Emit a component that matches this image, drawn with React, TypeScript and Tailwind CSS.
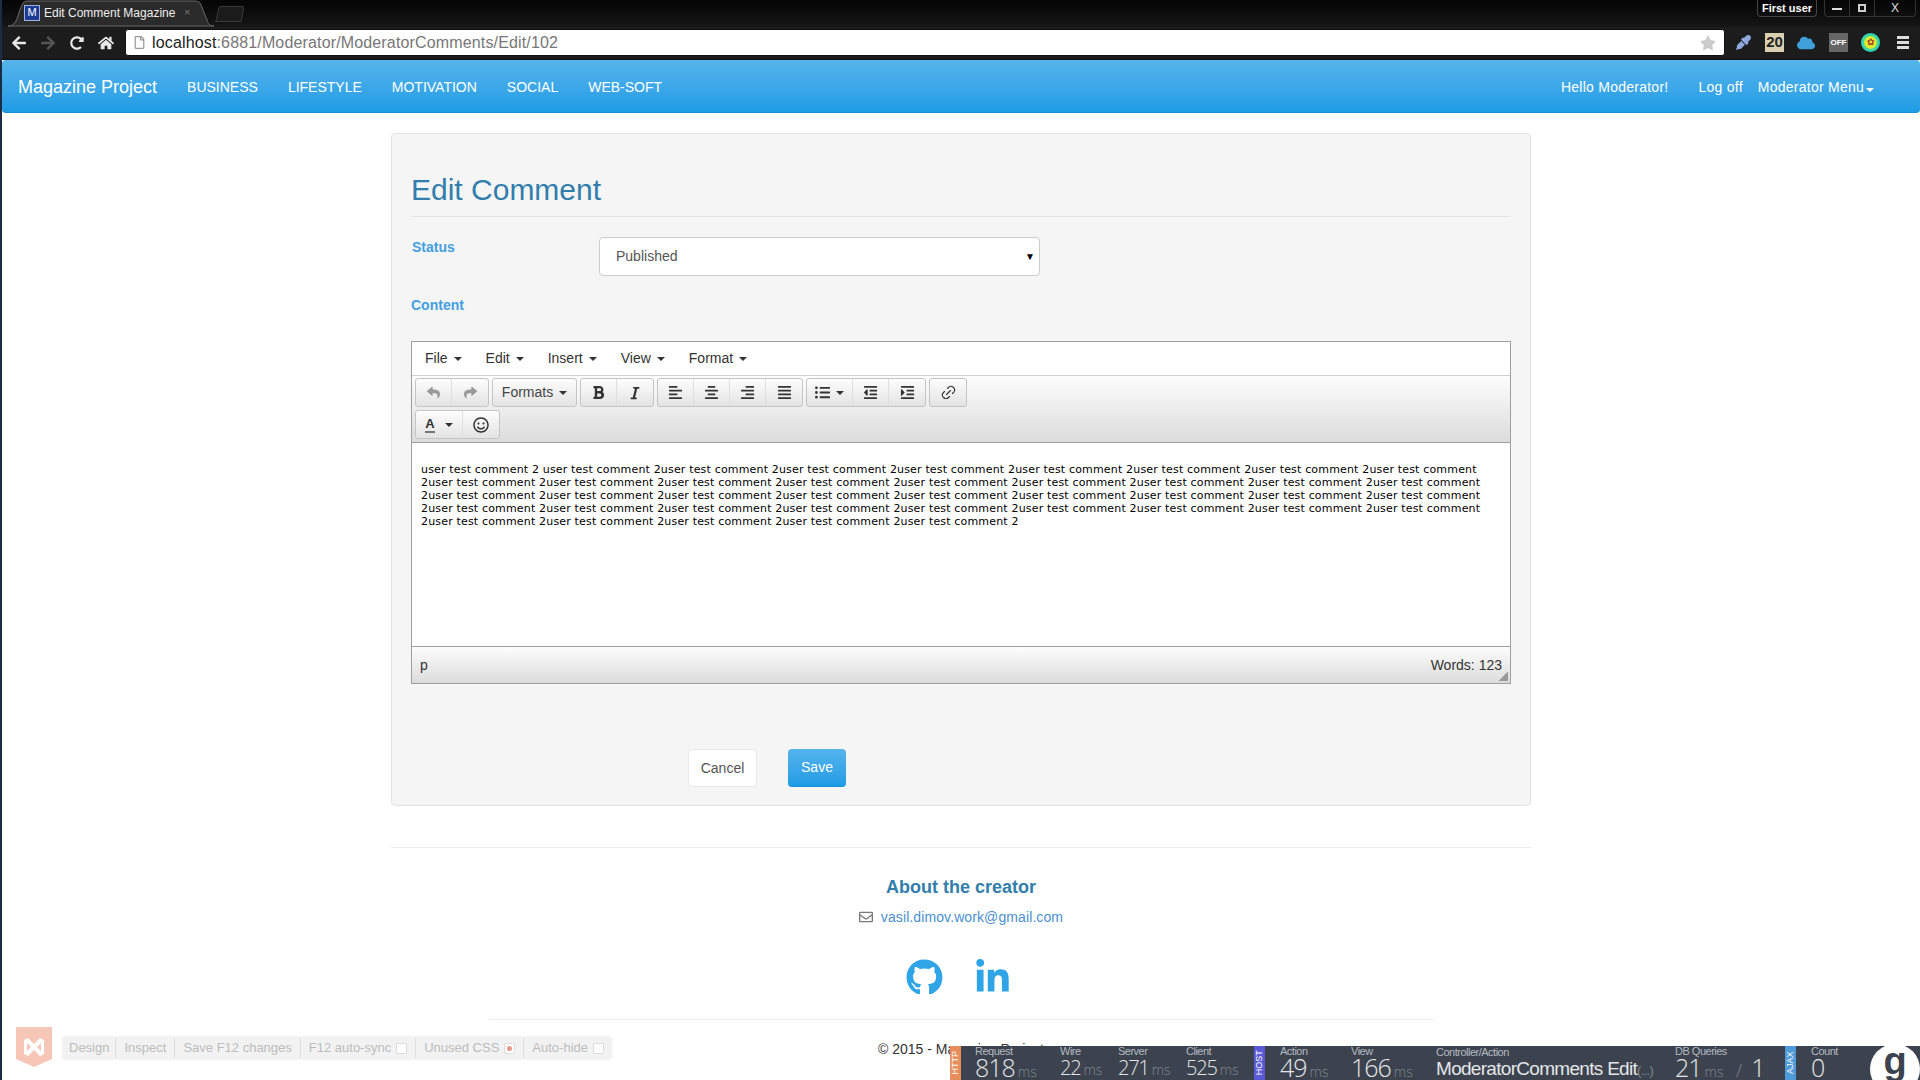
import type { ReactNode } from "react";
import {
  FaAlignCenter,
  FaAlignJustify,
  FaAlignLeft,
  FaAlignRight,
  FaArrowLeft,
  FaArrowRight,
  FaBold,
  FaCloud,
  FaEyeDropper,
  FaGithub,
  FaHome,
  FaIndent,
  FaItalic,
  FaLinkedinIn,
  FaListUl,
  FaOutdent,
  FaRedoAlt,
  FaRegEnvelope,
  FaRegFile,
  FaRegSmile,
  FaReply,
  FaShare,
  FaStar,
} from "react-icons/fa";
import { Link2 } from "lucide-react";

const navItems = ["BUSINESS", "LIFESTYLE", "MOTIVATION", "SOCIAL", "WEB-SOFT"];
const menuItems = ["File", "Edit", "Insert", "View", "Format"];
const commentLine = "2user test comment 2user test comment 2user test comment 2user test comment 2user test comment 2user test comment 2user test comment 2user test comment 2user test comment";

const Caret = ({ className = "border-t-[#333]" }: { className?: string }) => (
  <span className={`inline-block w-0 h-0 border-x-[4px] border-x-transparent border-t-[4px] ${className}`} />
);

const ToolGroup = ({ children }: { children: ReactNode }) => (
  <div className="flex h-[29px] rounded-[3px] border border-[#c5c5c5] bg-gradient-to-b from-[#fdfdfd] to-[#e3e3e3] text-[#333]">
    {children}
  </div>
);

const ToolBtn = ({ children, w = "w-9", last = false }: { children: ReactNode; w?: string; last?: boolean }) => (
  <div className={`flex items-center justify-center ${w} ${last ? "" : "border-r border-[#dedede]"}`}>{children}</div>
);

function BrowserChrome() {
  return (
    <div className="h-[60px] bg-[#141414] text-white">
      <div className="flex h-[27px] bg-gradient-to-b from-[#050505] to-[#161616]">
        <div className="relative ml-[6px] flex h-[27px] w-[206px] items-center pl-[16px]">
          <svg className="absolute inset-0" width="206" height="27" viewBox="0 0 206 27">
            <path d="M0 26 C7 26 9 20 11 12 L14 5 C15 2 17 1 20 1 L186 1 C190 1 192 2 193 5 L199 20 C200 24 202 26 206 26 Z" fill="#2b2b2b" stroke="#6b6b6b" />
          </svg>
          <div className="relative mb-[2px] flex h-4 w-4 items-center justify-center border border-[#9db3e0] bg-[#1f3a93] text-[11px]">M</div>
          <span className="relative mb-[2px] ml-[4px] w-[132px] overflow-hidden whitespace-nowrap text-[12px] text-[#eee]">Edit Comment Magazine P</span>
          <span className="relative mb-[2px] ml-[8px] text-[11px] text-[#777]">×</span>
        </div>
        <div className="mt-[6px] ml-[3px] h-[16px] w-[26px] -skew-x-12 rounded-t-[3px] border border-[#3a3a3a] bg-[#1b1b1b]" />
        <div className="ml-auto flex h-[17px] items-start pr-[4px]">
          <div className="flex h-[17px] w-[60px] items-center justify-center rounded-b-[4px] border border-t-0 border-[#444] text-[11px] font-bold">First user</div>
          <div className="ml-[7px] flex h-[17px] w-[92px] items-center rounded-b-[4px] border border-t-0 border-[#333] text-[#ddd]">
            <div className="flex h-full w-[25px] items-center justify-center border-r border-[#333]"><div className="mt-[2px] h-[2px] w-[10px] bg-[#ddd]" /></div>
            <div className="flex h-full w-[25px] items-center justify-center border-r border-[#333]">
              <div className="h-[8px] w-[8px] border-[2px] border-[#ccc]" />
            </div>
            <div className="flex-1 text-center text-[12px] leading-[15px]">X</div>
          </div>
        </div>
      </div>
      <div className="flex h-[31px] items-center bg-[#1c1c1c]">
        <div className="flex w-[123px] items-center text-[16px]">
          <FaArrowLeft className="ml-[9px]" color="#e8e8e8" />
          <FaArrowRight className="ml-[13px]" color="#555" />
          <FaRedoAlt className="ml-[14px] text-[14px]" color="#e8e8e8" />
          <FaHome className="ml-[14px]" color="#e8e8e8" />
        </div>
        <div className="flex h-[27px] w-[1600px] items-center rounded-[3px] border border-[#111] bg-white pl-[7px] pr-[8px]">
          <FaRegFile className="text-[13px]" color="#999" />
          <span className="ml-[6px] text-[16px] tracking-[0.15px] text-[#777]"><span className="text-[#222]">localhost</span>:6881/Moderator/ModeratorComments/Edit/102</span>
          <FaStar className="ml-auto text-[16px]" color="#ccc" />
        </div>
        <div className="flex items-center">
          <FaEyeDropper className="ml-[11px] text-[15px]" color="#8fa8e0" />
          <div className="ml-[14px] flex h-[19px] w-[19px] items-center justify-center bg-[#d8d0b0] text-[15px] font-bold text-[#222]">20</div>
          <FaCloud className="ml-[13px] text-[18px]" color="#3f9fd8" />
          <div className="ml-[14px] flex h-[19px] w-[19px] items-center justify-center bg-[#666] text-[8px] font-bold">OFF</div>
          <div className="ml-[13px] flex h-[19px] w-[19px] items-center justify-center rounded-full border-[3px] border-[#33d6b0] bg-[#dce82a] text-[9px] text-[#a33]">✿</div>
          <div className="ml-[17px] flex w-[12px] flex-col gap-[2px]">
            <div className="h-[3px] bg-[#ddd]" />
            <div className="h-[3px] bg-[#ddd]" />
            <div className="h-[3px] bg-[#ddd]" />
          </div>
        </div>
      </div>
    </div>
  );
}

function Navbar() {
  return (
    <div className="flex h-[53px] items-center rounded-[4px] border-b border-[#1a8fd6] bg-gradient-to-b from-[#54b4eb] to-[#1d9ce5] pt-[2px] text-[14px] text-white">
      <div className="ml-[16px] text-[18px]">Magazine Project</div>
      <div className="ml-[15px] flex">
        {navItems.map((item) => (
          <div key={item} className="px-[15px]">{item}</div>
        ))}
      </div>
      <div className="ml-auto flex items-center pr-[46px] tracking-[0.25px]">
        <span>Hello Moderator!</span>
        <span className="ml-[30px]">Log off</span>
        <span className="ml-[15px]">Moderator Menu</span>
        <span className="ml-[2px]"><Caret className="border-t-white" /></span>
      </div>
    </div>
  );
}

function Editor() {
  return (
    <div className="mt-[27px] border border-[#9e9e9e] bg-white">
      <div className="flex h-[34px] items-center gap-[24px] border-b border-[#d0d0d0] pl-[13px] text-[14px] text-[#333]">
        {menuItems.map((item) => (
          <div key={item} className="flex items-center gap-[6px]">
            {item}
            <Caret />
          </div>
        ))}
      </div>
      <div className="flex h-[67px] flex-col gap-[3px] border-b border-[#9e9e9e] bg-gradient-to-b from-[#fdfdfd] to-[#dcdcdc] pl-[3px] pt-[2px] text-[15px]">
        <div className="flex gap-[3px]">
          <ToolGroup>
            <ToolBtn><FaReply color="#999" className="text-[13px]" /></ToolBtn>
            <ToolBtn last><FaShare color="#999" className="text-[13px]" /></ToolBtn>
          </ToolGroup>
          <ToolGroup>
            <div className="flex w-[83px] items-center justify-center gap-[6px] text-[14px] text-[#444]">Formats <Caret /></div>
          </ToolGroup>
          <ToolGroup>
            <ToolBtn><FaBold className="text-[15px]" /></ToolBtn>
            <ToolBtn last><FaItalic className="text-[14px]" /></ToolBtn>
          </ToolGroup>
          <ToolGroup>
            <ToolBtn><FaAlignLeft /></ToolBtn>
            <ToolBtn><FaAlignCenter /></ToolBtn>
            <ToolBtn><FaAlignRight /></ToolBtn>
            <ToolBtn last><FaAlignJustify /></ToolBtn>
          </ToolGroup>
          <ToolGroup>
            <ToolBtn w="w-[46px]"><FaListUl /><span className="ml-[6px] flex"><Caret /></span></ToolBtn>
            <ToolBtn><FaOutdent /></ToolBtn>
            <ToolBtn last><FaIndent /></ToolBtn>
          </ToolGroup>
          <ToolGroup>
            <ToolBtn last><Link2 size={17} strokeWidth={1.6} className="-rotate-45" /></ToolBtn>
          </ToolGroup>
        </div>
        <div className="flex">
          <ToolGroup>
            <ToolBtn w="w-[47px]">
              <span className="border-b-[2px] border-[#777] text-[13px] font-bold leading-[15px]">A</span>
              <span className="ml-[10px] flex"><Caret /></span>
            </ToolBtn>
            <ToolBtn w="w-9" last><FaRegSmile className="text-[16px]" /></ToolBtn>
          </ToolGroup>
        </div>
      </div>
      <div className="h-[203px] whitespace-nowrap pl-[9px] pt-[20px] font-['DejaVu_Sans',sans-serif] text-[11px] leading-[13px] tracking-[0.17px] text-black">
        <div>user test comment 2 user test comment 2user test comment 2user test comment 2user test comment 2user test comment 2user test comment 2user test comment 2user test comment</div>
        <div>{commentLine}</div>
        <div>{commentLine}</div>
        <div>{commentLine}</div>
        <div>2user test comment 2user test comment 2user test comment 2user test comment 2user test comment 2</div>
      </div>
      <div className="relative flex h-[37px] items-center justify-between border-t border-[#9e9e9e] bg-gradient-to-b from-[#fdfdfd] to-[#dcdcdc] px-[8px] text-[14px] text-[#333]">
        <span>p</span>
        <span>Words: 123</span>
        <div className="absolute bottom-[2px] right-[2px] h-[9px] w-[9px] bg-[linear-gradient(135deg,transparent_50%,#999_50%)]" />
      </div>
    </div>
  );
}

function Glimpse() {
  const Metric = ({ x, label, value, unit, small = false }: { x: string; label: string; value: string; unit?: string; small?: boolean }) => (
    <div className={`absolute top-0 ${x} whitespace-nowrap`}>
      <div className="h-[10px] text-[11px] leading-[10px] tracking-[-0.5px] text-[#b5bac2]">{label}</div>
      <div className={`font-['Open_Sans',sans-serif] font-light leading-[23px] text-[#e4e6e9] ${small ? "text-[20px] tracking-[-1.2px]" : "text-[25px] tracking-[-1px]"}`}>
        {value}
        {unit && <span className="ml-[3px] text-[14px] tracking-normal text-[#80868f]">{unit}</span>}
      </div>
    </div>
  );
  const Tag = ({ x, color, text }: { x: string; color: string; text: string }) => (
    <div className={`absolute top-0 flex h-full w-[11px] items-center justify-center text-[9px] text-white ${x} ${color}`}>
      <span className="-rotate-90">{text}</span>
    </div>
  );
  return (
    <div className="absolute bottom-0 right-0 h-[34px] w-[970px] overflow-hidden bg-[#3c434e]">
      <Tag x="left-0" color="bg-[#e88d5c]" text="HTTP" />
      <Metric x="left-[25px]" label="Request" value="818" unit="ms" />
      <Metric x="left-[110px]" label="Wire" value="22" unit="ms" small />
      <Metric x="left-[168px]" label="Server" value="271" unit="ms" small />
      <Metric x="left-[236px]" label="Client" value="525" unit="ms" small />
      <Tag x="left-[304px]" color="bg-[#5a5ad6]" text="HOST" />
      <Metric x="left-[330px]" label="Action" value="49" unit="ms" />
      <Metric x="left-[401px]" label="View" value="166" unit="ms" />
      <div className="absolute left-[486px] top-0 whitespace-nowrap">
        <div className="h-[13px] text-[11px] leading-[13px] tracking-[-0.5px] text-[#b5bac2]">Controller/Action</div>
        <div className="text-[19px] leading-[20px] tracking-[-0.7px] text-[#e4e6e9]">ModeratorComments Edit<span className="text-[13px] text-[#80868f]">(...)</span></div>
      </div>
      <Metric x="left-[725px]" label="DB Queries" value="21" unit="ms" />
      <div className="absolute left-[786px] top-[10px] font-['Open_Sans',sans-serif] font-light text-[25px] leading-[23px] text-[#e4e6e9]"><span className="mr-[9px] text-[18px] text-[#80868f]">/</span>1</div>
      <Tag x="left-[835px]" color="bg-[#4f9ad8]" text="AJAX" />
      <Metric x="left-[861px]" label="Count" value="0" />
      <div className="absolute left-[920px] top-[-2px] flex h-[50px] w-[50px] items-start justify-center rounded-full bg-white">
        <span className="text-[38px] font-bold leading-[34px] text-[#3c434e]">g</span>
      </div>
    </div>
  );
}

function BrowserLink() {
  const cell = "border-l border-[#dddddd] px-[8px]";
  const box = "ml-[5px] inline-block h-[11px] w-[11px] rounded-[2px] border border-[#dcdcdc] bg-white align-middle";
  return (
    <div className="absolute bottom-[20px] left-[14px] flex items-end">
      <svg width="36" height="40" viewBox="0 0 36 40" className="mb-[-7px]">
        <path d="M0 0 H36 V32 L18 40 L0 32 Z" fill="#f6c6b6" />
        <path d="M8 13 L12 11 L18 17 L24 11 L28 13 V27 L24 29 L18 23 L12 29 L8 27 Z" fill="#fff" />
        <path d="M11 16 L15 20 L11 24 Z M25 16 L21 20 L25 24 Z" fill="#f6c6b6" />
      </svg>
      <div className="ml-[10px] flex h-[24px] w-[550px] items-center rounded-[4px] bg-[#f2f2f2] pl-[1px] text-[13px] text-[#bcbcbc]">
        <span className="px-[6px]">Design</span>
        <span className={cell}>Inspect</span>
        <span className={cell}>Save F12 changes</span>
        <span className={cell}>F12 auto-sync<span className={box} /></span>
        <span className={cell}>Unused CSS<span className={`${box} relative bg-[#f4d9d0]`}><span className="absolute left-[2px] top-[2px] h-[5px] w-[5px] rounded-full bg-[#e59a85]" /></span></span>
        <span className={cell}>Auto-hide<span className={box} /></span>
      </div>
    </div>
  );
}

export default function App() {
  return (
    <div className="relative h-[1080px] overflow-hidden border-l-2 border-[#1d2b45] bg-white font-['Liberation_Sans',Arial,sans-serif] text-[14px]">
      <BrowserChrome />
      <Navbar />
      <div className="mx-auto w-[1140px]">
        <div className="mt-[20px] h-[673px] rounded-[4px] border border-[#e3e3e3] bg-[#f5f5f5] px-[19px] pt-[38px]">
          <h2 className="border-b border-[#e4e4e4] pb-[8px] text-[30px] leading-[36px] text-[#317eac]">Edit Comment</h2>
          <div className="mt-[20px] flex items-start">
            <label className="w-[188px] pl-px font-bold text-[#429fe0]">Status</label>
            <div className="flex h-[39px] w-[441px] items-center justify-between rounded-[4px] border border-[#ccc] bg-white pl-[16px] pr-[4px] text-[#555]">
              <span>Published</span>
              <span className="text-[10px] text-black">▼</span>
            </div>
          </div>
          <label className="mt-[20px] block font-bold leading-[18px] text-[#429fe0]">Content</label>
          <Editor />
          <div className="ml-[277px] mt-[65px] flex gap-[31px]">
            <div className="flex h-[38px] w-[69px] items-center justify-center rounded-[4px] border border-[#e8e8e8] bg-white text-[#555]">Cancel</div>
            <div className="flex h-[38px] w-[58px] items-center justify-center rounded-[4px] border-b border-[#1a8fd6] bg-gradient-to-b from-[#54b4eb] to-[#1d9ce5] text-white">Save</div>
          </div>
        </div>
        <div className="mt-[41px] border-t border-[#eeeeee] pt-[29px] text-center">
          <div className="text-[18px] font-bold leading-[20px] text-[#317eac]">About the creator</div>
          <div className="mt-[10px] flex items-center justify-center gap-[8px] leading-[20px] tracking-[0.1px] text-[#4a90d0]">
            <FaRegEnvelope color="#777" />
            <span>vasil.dimov.work@gmail.com</span>
          </div>
          <div className="mt-[32px] flex h-[35px] justify-center gap-[31px] overflow-hidden pr-[5px] text-[#2fa4e7]">
            <FaGithub size={37} />
            <FaLinkedinIn size={37} />
          </div>
        </div>
        <div className="mx-auto mt-[25px] w-[945px] border-t border-[#eeeeee] pt-[19px] text-center leading-[20px] text-[#333]">© 2015 - Magazine Project</div>
      </div>
      <BrowserLink />
      <Glimpse />
    </div>
  );
}
